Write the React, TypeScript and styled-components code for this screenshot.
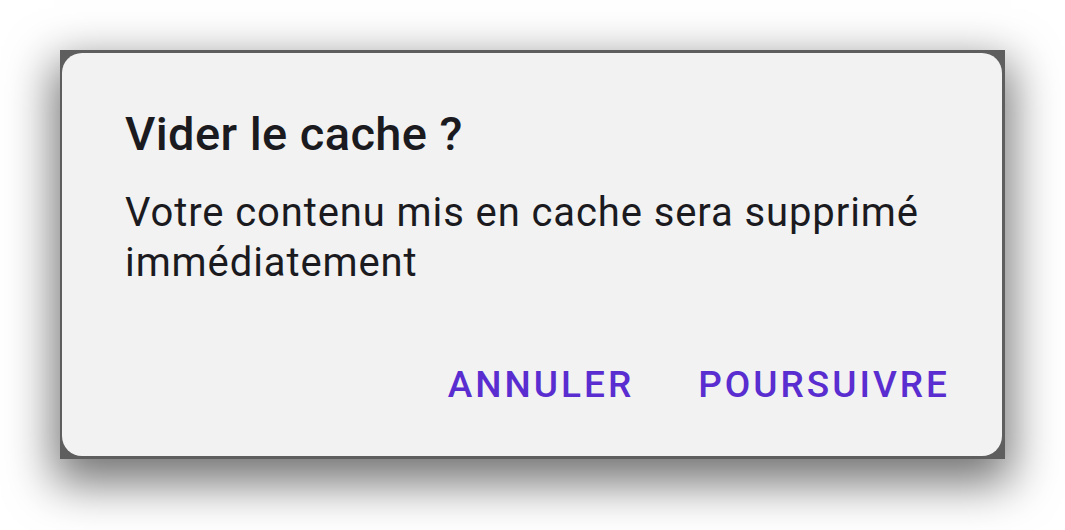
import styled, { createGlobalStyle } from "styled-components";

const GlobalStyle = createGlobalStyle`
  html, body {
    margin: 0;
    padding: 0;
    background: #ffffff;
    font-family: Roboto, "Noto Sans", sans-serif;
  }
`;

const Page = styled.div`
  width: 1065px;
  height: 530px;
  box-sizing: border-box;
  padding: 50px 0 0 60px;
  overflow: hidden;
`;

// the dimmed app screen behind the dialog
const Scrim = styled.div`
  width: 945px;
  height: 409px;
  box-sizing: border-box;
  padding: 3px 3px 3px 2px;
  background-color: #5e5e5e;
  box-shadow: 0 18px 44px 6px rgba(0, 0, 0, 0.55);
  display: flex;
`;

const Dialog = styled.div`
  flex: 1;
  background-color: #f2f2f2;
  border-radius: 20px;
  padding: 53px 52px 0 63px;
  display: flex;
  flex-direction: column;
`;

const Title = styled.h2`
  margin: 0;
  font-size: 47px;
  font-weight: 500;
  letter-spacing: 0.4px;
  line-height: 56px;
  color: #1b1b1f;
`;

const Message = styled.p`
  margin: 26px 0 0;
  font-size: 40px;
  font-weight: 400;
  letter-spacing: 0.9px;
  line-height: 50px;
  color: #1b1b1f;
`;

const Actions = styled.div`
  display: flex;
  justify-content: flex-end;
  gap: 64px;
  margin-top: 77px;
`;

const TextButton = styled.button`
  border: none;
  background: none;
  padding: 0;
  font-family: Roboto, sans-serif;
  font-size: 37px;
  font-weight: 500;
  letter-spacing: 3px;
  line-height: 40px;
  color: #5a2dd0;
  cursor: pointer;
`;

const App = () => {
  return (
    <>
      <GlobalStyle />
      <Page>
        <Scrim>
          <Dialog>
            <Title>Vider le cache ?</Title>
            <Message>
              Votre contenu mis en cache sera supprimé immédiatement
            </Message>
            <Actions>
              <TextButton>ANNULER</TextButton>
              <TextButton>POURSUIVRE</TextButton>
            </Actions>
          </Dialog>
        </Scrim>
      </Page>
    </>
  );
};

export default App;
